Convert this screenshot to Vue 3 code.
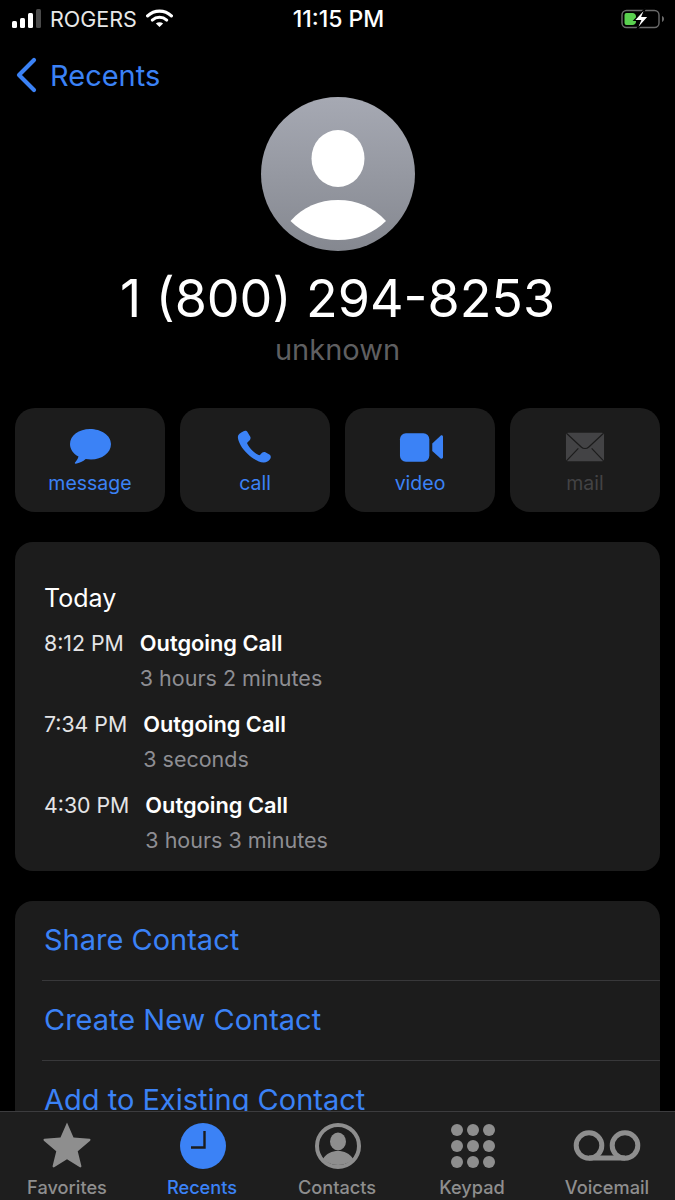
<script setup>
const actions = [
  { label: 'message', icon: 'message' },
  { label: 'call', icon: 'call' },
  { label: 'video', icon: 'video' },
  { label: 'mail', icon: 'mail', disabled: true },
]

const calls = [
  { time: '8:12 PM', type: 'Outgoing Call', length: '3 hours 2 minutes' },
  { time: '7:34 PM', type: 'Outgoing Call', length: '3 seconds' },
  { time: '4:30 PM', type: 'Outgoing Call', length: '3 hours 3 minutes' },
]

const links = ['Share Contact', 'Create New Contact', 'Add to Existing Contact']

const tabs = [
  { label: 'Favorites', icon: 'star' },
  { label: 'Recents', icon: 'clock', active: true },
  { label: 'Contacts', icon: 'person' },
  { label: 'Keypad', icon: 'keypad' },
  { label: 'Voicemail', icon: 'voicemail' },
]

const keypadDots = [0, 1, 2, 3, 4, 5, 6, 7, 8]
</script>

<template>
  <div class="screen">
    <header class="status-bar">
      <div class="status-left">
        <div class="signal">
          <span class="bar b1"></span>
          <span class="bar b2"></span>
          <span class="bar b3"></span>
          <span class="bar b4"></span>
        </div>
        <span class="carrier">ROGERS</span>
        <svg class="wifi" viewBox="0 0 28 20" width="27" height="19">
          <path d="M1.500 7.200C8.600.6 19.400.6 26.500 7.200" fill="none" stroke="#fff" stroke-width="3.400" stroke-linecap="round" />
          <path d="M6.400 11.600c4.400-3.900 10.800-3.900 15.200 0" fill="none" stroke="#fff" stroke-width="3.200" stroke-linecap="round" />
          <path d="M10.200 15.300 14 19l3.800-3.700c-2.200-1.900-5.400-1.900-7.600 0z" fill="#fff" />
        </svg>
      </div>
      <div class="clock">11:15 PM</div>
      <svg class="battery" viewBox="0 0 44 22" width="44" height="22">
        <rect x="1" y="2.500" width="37" height="17" rx="4.500" fill="none" stroke="#6b6b6b" stroke-width="1.400" />
        <path d="M41 8v6c1.200-.4 2-1.600 2-3s-.8-2.600-2-3z" fill="#6b6b6b" />
        <path d="M3.500 7a2 2 0 0 1 2-2h6c2 0 3.500 1.500 3.500 3.500v5c0 2-1.500 3.500-3.500 3.500h-6a2 2 0 0 1-2-2z" fill="#5ad04f" />
        <path d="M24.500 0 13 12.500h6.500L15.500 22 27.500 8.500h-6.500z" fill="#fff" stroke="#000" stroke-width="1.200" />
      </svg>
    </header>

    <nav class="nav-row">
      <svg class="chevron" viewBox="0 0 22 36" width="22" height="36">
        <path d="M19 3 4 18l15 15" fill="none" stroke="#3b82f6" stroke-width="4.200" stroke-linecap="round" stroke-linejoin="round" />
      </svg>
      <span class="nav-label">Recents</span>
    </nav>

    <section class="profile">
      <svg class="avatar" viewBox="0 0 154 154" width="154" height="154">
        <defs>
          <linearGradient id="avatarFill" x1="0" y1="0" x2="0" y2="1">
            <stop offset="0" stop-color="#a6a9b3" />
            <stop offset="1" stop-color="#858890" />
          </linearGradient>
        </defs>
        <circle cx="77" cy="77" r="77" fill="url(#avatarFill)" />
        <ellipse cx="77" cy="61.500" rx="26.500" ry="28.500" fill="#fff" />
        <path d="M29.500 124C42 110 58 103 77 103s35 7 48 21c-12 12-29 19-48 19s-35.500-7-47.500-19z" fill="#fff" />
      </svg>
      <h1 class="number">1 (800) 294-8253</h1>
      <div class="sub">unknown</div>
    </section>

    <section class="actions">
      <div v-for="action in actions" :key="action.label" class="action" :class="{ disabled: action.disabled }">
        <svg v-if="action.icon === 'message'" viewBox="0 0 42 38" width="42" height="38">
          <path d="M21 1C10 1 1 7.500 1 16c0 5.200 3.300 9.800 8.500 12.500-.6 2.200-2.100 4.500-3.500 6-.5.600 0 1.400.8 1.200 3.500-.6 7.300-2.300 9.900-4.700 1.700.3 3.500.5 5.300.5 11 0 20-6.700 20-15.500S32 1 21 1z" fill="#3b82f6" />
        </svg>
        <svg v-else-if="action.icon === 'call'" class="icon-call" viewBox="0 0 38 38" width="36" height="36">
          <path d="M9 2.500c1.500-1 3.400-.6 4.300.9l2.700 4.600c.8 1.400.5 3-.7 4.100l-2 1.800c-.5.500-.6 1.100-.3 1.700 1.400 2.800 3.300 5.300 5.500 7.400 2 1.900 4.100 3.400 6.400 4.500.6.300 1.200.2 1.700-.3l1.900-2c1.100-1.100 2.700-1.300 4-.5l3.800 2.300c1.600 1 2 3.100.8 4.600-1.700 2.200-4.200 3.900-7 3.700-5.500-.4-12-4.300-17.200-9.400C7.300 20.700 3.300 13.800 3 8.500 2.900 6 5.500 4.400 9 2.500z" fill="#3b82f6" />
        </svg>
        <svg v-else-if="action.icon === 'video'" class="icon-video" viewBox="0 0 46 32" width="45" height="32">
          <rect x="1" y="2" width="30" height="29" rx="6" fill="#3b82f6" />
          <path d="M34 12.500 42.500 4.500c1-.9 2.500-.2 2.500 1.100v21c0 1.300-1.500 2-2.500 1.100L34 20z" fill="#3b82f6" />
        </svg>
        <svg v-else viewBox="0 0 42 32" width="40" height="32">
          <rect x="1" y="1" width="40" height="30" rx="2" fill="#434345" />
          <path d="M1.500 1.500 17 16c2.300 2.100 5.700 2.100 8 0L40.500 1.500M1.500 30.500 14 17.500M40.500 30.500 28 17.500" fill="none" stroke="#1c1c1c" stroke-width="1.300" />
        </svg>
        <span class="action-label">{{ action.label }}</span>
      </div>
    </section>

    <section class="card history">
      <div class="today">Today</div>
      <div v-for="call in calls" :key="call.time" class="call-row">
        <span class="call-time">{{ call.time }}</span>
        <div class="call-info">
          <div class="call-type">{{ call.type }}</div>
          <div class="call-length">{{ call.length }}</div>
        </div>
      </div>
    </section>

    <section class="card links">
      <div v-for="link in links" :key="link" class="link-row">{{ link }}</div>
    </section>

    <footer class="tab-bar">
      <div v-for="tab in tabs" :key="tab.label" class="tab" :class="{ active: tab.active }">
        <div class="tab-icon">
          <svg v-if="tab.icon === 'star'" class="icon-star" viewBox="0 0 50 49" width="48" height="47">
            <path d="M25 1.500 31.800 17.200 48.500 18.500c1 .1 1.400 1.300.6 2L36.200 31.500 40 47c.2 1-.8 1.700-1.600 1.200L25 40 11.600 48.200c-.8.5-1.800-.2-1.600-1.200l3.800-15.500L.9 20.500c-.8-.7-.4-1.900.6-2L18.200 17.200z" fill="#8e8e8e" />
          </svg>
          <svg v-else-if="tab.icon === 'clock'" viewBox="0 0 46 46" width="46" height="46">
            <circle cx="23" cy="23" r="23" fill="#3b82f6" />
            <path d="M24.500 8v16.500H11" fill="none" stroke="#1c1c1c" stroke-width="2.400" />
          </svg>
          <svg v-else-if="tab.icon === 'person'" viewBox="0 0 46 46" width="46" height="46">
            <circle cx="23" cy="23" r="21" fill="none" stroke="#8e8e8e" stroke-width="4" />
            <ellipse cx="23" cy="18.500" rx="8" ry="9" fill="#8e8e8e" />
            <path d="M8 36c3-5.500 9-8 15-8s12 2.500 15 8c-4 4-9 6-15 6s-11-2-15-6z" fill="#8e8e8e" />
          </svg>
          <div v-else-if="tab.icon === 'keypad'" class="keypad">
            <span v-for="dot in keypadDots" :key="dot" class="dot"></span>
          </div>
          <svg v-else class="icon-voicemail" viewBox="0 0 68 32" width="68" height="32">
            <circle cx="16" cy="15.500" r="12.800" fill="none" stroke="#8e8e8e" stroke-width="5" />
            <circle cx="52" cy="15.500" r="12.800" fill="none" stroke="#8e8e8e" stroke-width="5" />
            <path d="M16 28h36" stroke="#8e8e8e" stroke-width="5" />
          </svg>
        </div>
        <span class="tab-label">{{ tab.label }}</span>
      </div>
    </footer>
  </div>
</template>

<style>
html,
body {
  margin: 0;
  background: #000;
}
</style>

<style scoped>
.screen {
  position: relative;
  width: 675px;
  height: 1200px;
  overflow: hidden;
  background: #000;
  font-family: Inter, "Liberation Sans", sans-serif;
  color: #fff;
}

.status-bar {
  display: grid;
  grid-template-columns: 1fr auto 1fr;
  align-items: center;
  height: 37px;
  padding: 0 10px 0 12px;
}

.status-left {
  display: flex;
  align-items: center;
}

.signal {
  display: flex;
  align-items: flex-end;
  gap: 3px;
  height: 19px;
}

.bar {
  width: 5px;
  border-radius: 1.500px;
  background: #fff;
}

.b1 { height: 7px; }
.b2 { height: 10px; }
.b3 { height: 15px; }
.b4 { height: 19px; background: #4a4a4a; }

.carrier {
  margin-left: 9px;
  font-size: 21.500px;
  font-weight: 400;
  color: #e8e8e8;
}

.wifi {
  margin-left: 9px;
}

.clock {
  font-size: 23px;
  font-weight: 500;
}

.battery {
  justify-self: end;
}

.nav-row {
  display: flex;
  align-items: center;
  height: 76px;
  padding-left: 15px;
}

.nav-label {
  margin-left: 13px;
  font-size: 29px;
  color: #3b82f6;
}

.profile {
  display: flex;
  flex-direction: column;
  align-items: center;
  margin-top: -16px;
}

.number {
  margin: 18px 0 0;
  font-size: 52px;
  line-height: 60px;
  font-weight: 400;
}

.sub {
  margin-top: 3px;
  font-size: 29px;
  line-height: 36px;
  color: #5f5f61;
}

.actions {
  display: grid;
  grid-template-columns: repeat(4, 1fr);
  gap: 15px;
  margin: 40px 15px 0;
}

.action {
  display: flex;
  flex-direction: column;
  align-items: center;
  height: 104px;
  border-radius: 20px;
  background: #1c1c1c;
  color: #3b82f6;
}

.action svg {
  margin-top: 20px;
  height: 38px;
}

.action .icon-call {
  margin-left: -4px;
}

.action .icon-video {
  margin-left: 3px;
}

.action-label {
  margin-top: 3px;
  font-size: 19.500px;
  line-height: 28px;
}

.action.disabled {
  color: #434345;
}

.card {
  margin: 30px 15px 0;
  border-radius: 18px;
  background: #1c1c1c;
}

.history {
  height: 329px;
  padding: 39px 29px 0;
  box-sizing: border-box;
}

.today {
  font-size: 25px;
  line-height: 34px;
}

.call-row {
  display: flex;
  margin-top: 15px;
  height: 66px;
}

.today + .call-row {
  margin-top: 13px;
}

.call-time {
  font-size: 21.300px;
  line-height: 30px;
  color: #e4e4e6;
}

.call-info {
  margin-left: 16px;
}

.call-type {
  font-size: 21.800px;
  line-height: 30px;
  font-weight: 600;
}

.call-length {
  margin-top: 4px;
  font-size: 21.500px;
  line-height: 32px;
  color: #8e8e93;
}

.links {
  padding-left: 27px;
}

.link-row {
  height: 79px;
  padding-left: 2px;
  line-height: 77px;
  font-size: 29px;
  color: #3b82f6;
  border-bottom: 1px solid #38383a;
}

.tab-bar {
  position: absolute;
  left: 0;
  right: 0;
  bottom: 0;
  display: grid;
  grid-template-columns: repeat(5, 135px);
  height: 88px;
  background: #1e1e1e;
  border-top: 1px solid #3c3c3e;
}

.tab {
  display: flex;
  flex-direction: column;
  align-items: center;
  color: #8e8e8e;
}

.tab.active {
  color: #3b82f6;
}

.tab-icon {
  display: flex;
  align-items: center;
  justify-content: center;
  height: 56px;
  margin-top: 6px;
}

.icon-star {
  margin-right: 1px;
  margin-bottom: 4px;
}

.icon-voicemail {
  margin-right: 2px;
}

.tab-label {
  margin-top: 1px;
  margin-right: 1px;
  font-size: 18.200px;
  line-height: 24px;
  font-weight: 500;
}

.keypad {
  display: grid;
  grid-template-columns: repeat(3, 12px);
  gap: 4px;
}

.dot {
  width: 12px;
  height: 12px;
  border-radius: 50%;
  background: #8e8e8e;
}
</style>
